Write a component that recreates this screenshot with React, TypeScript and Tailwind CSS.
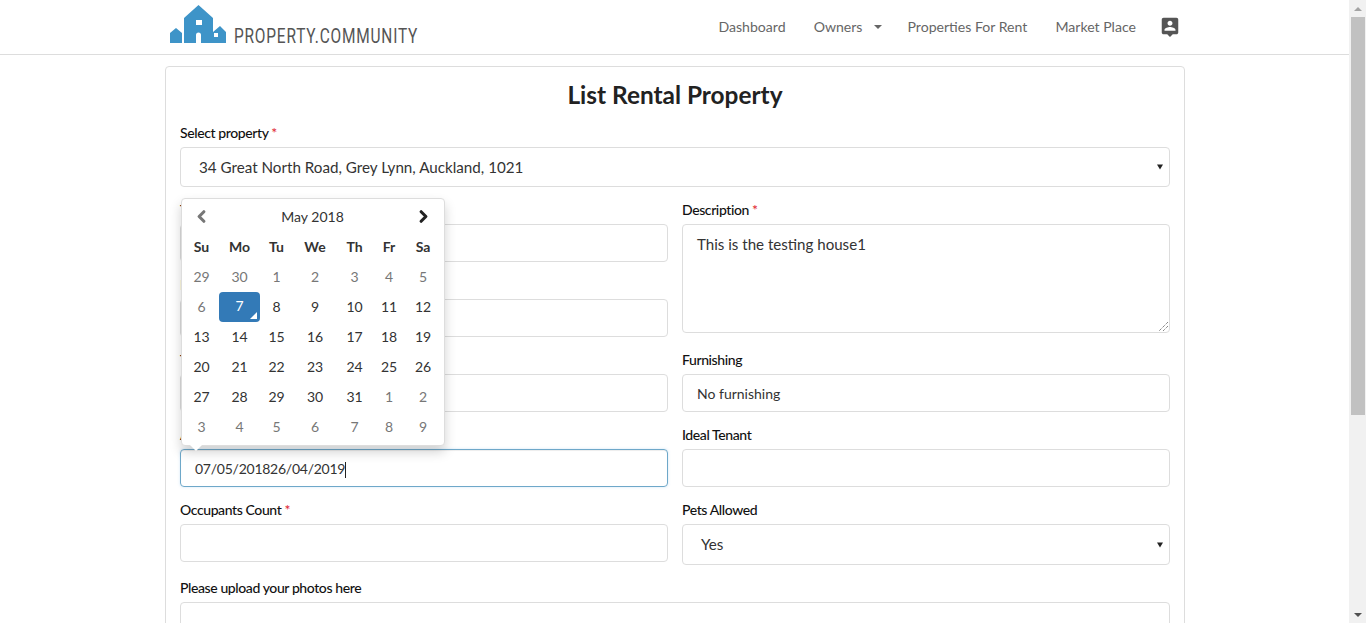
import React from 'react';
import { ChevronLeft, ChevronRight } from 'lucide-react';

const DOW = ['Su', 'Mo', 'Tu', 'We', 'Th', 'Fr', 'Sa'];
const DAYS = [
  29, 30, 1, 2, 3, 4, 5,
  6, 7, 8, 9, 10, 11, 12,
  13, 14, 15, 16, 17, 18, 19,
  20, 21, 22, 23, 24, 25, 26,
  27, 28, 29, 30, 31, 1, 2,
  3, 4, 5, 6, 7, 8, 9,
];

const inputClass =
  'block w-full h-[38px] border border-[#ddd] rounded-[4px] bg-white px-[14px] text-[14px] text-[#333] outline-none';

const Label: React.FC<{ text: string; required?: boolean; tone?: string }> = ({ text, required, tone }) => (
  <div className={`h-5 mb-1 text-[14px] tracking-[-0.4px] leading-5 font-medium whitespace-nowrap ${tone ?? 'text-[#111]'}`}>
    {text}
    {required && <span className="text-[#e0232e]"> *</span>}
  </div>
);

const Arrow = () => (
  <div className="absolute right-[7px] top-1/2 -translate-y-1/2 w-0 h-0 border-x-[3px] border-x-transparent border-t-[5px] border-t-[#222]" />
);

const Logo = () => (
  <div className="flex items-end gap-[7px]">
    <svg width="57" height="38" viewBox="0 0 57 38" className="block">
      <path
        fill="#3e94c8"
        fillRule="evenodd"
        d="M0 38V28L6 23 12 28V38ZM14 38V13L28.5 0 43 13V27L50 21 56 27V38H31V30a2.5 2.5 0 0 0-5 0V38ZM26 15V20H32V15ZM44 28V32H48V28Z"
      />
    </svg>
    <span className="block w-[184px] h-[24px] -mb-[5px] text-[#555] text-[21px] leading-[24px] tracking-[1.1px] origin-left scale-x-[0.735] whitespace-nowrap font-['Roboto',sans-serif]">
      PROPERTY.COMMUNITY
    </span>
  </div>
);

const PersonPin = () => (
  <svg width="22" height="22" viewBox="0 0 24 24" className="ml-[23px] block" fill="#555">
    <path d="M19 2H5c-1.11 0-2 .9-2 2v14c0 1.1.89 2 2 2h4l3 3 3-3h4c1.1 0 2-.9 2-2V4c0-1.1-.9-2-2-2zm-7 3.3c1.49 0 2.7 1.21 2.7 2.7 0 1.49-1.21 2.7-2.7 2.7-1.49 0-2.7-1.21-2.7-2.7 0-1.49 1.21-2.7 2.7-2.7zM18 16H6v-.9c0-2 4-3.1 6-3.1s6 1.1 6 3.1v.9z" />
  </svg>
);

const Calendar = () => (
  <div className="absolute left-px bottom-[41px] w-[264px] h-[248px] z-10 bg-white rounded-[4px] border border-[#ddd] shadow-[0_6px_12px_rgba(0,0,0,0.18)] pl-[2px] pt-[3px] text-[14px]">
    <div className="grid grid-cols-[35px_41px_33px_44px_35px_34px_34px] auto-rows-[30px] items-center text-center">
      <div className="flex justify-center text-[#777] pb-[2px]">
        <ChevronLeft size={19} strokeWidth={4} />
      </div>
      <div className="col-span-5 text-[#333] pb-[2px]">May 2018</div>
      <div className="flex justify-center text-[#222] pb-[2px]">
        <ChevronRight size={19} strokeWidth={4} />
      </div>
      {DOW.map((d) => (
        <div key={d} className="font-bold text-[#333] pb-[2px]">
          {d}
        </div>
      ))}
      {DAYS.map((d, i) => {
        const muted = i < 7 || i === 7 || i > 32;
        if (i === 8) {
          return (
            <div key={i} className="relative h-[30px] leading-[28px] bg-[#337ab7] text-white rounded-[4px]">
              {d}
              <span className="absolute right-[3px] bottom-[3px] w-0 h-0 border-l-[7px] border-l-transparent border-b-[7px] border-b-white" />
            </div>
          );
        }
        return (
          <div key={i} className={`pb-[2px] ${muted ? 'text-[#777]' : 'text-[#333]'}`}>
            {d}
          </div>
        );
      })}
    </div>
    <div className="absolute left-[8px] top-full w-0 h-0 border-x-[6px] border-x-transparent border-t-[6px] border-t-white" />
  </div>
);

const Scrollbar = () => (
  <div className="w-[17px] h-full bg-[#f1f1f1] flex flex-col items-center shrink-0">
    <div className="h-[17px] flex items-center justify-center">
      <div className="w-0 h-0 border-x-[4px] border-x-transparent border-b-[4px] border-b-[#a3a3a3]" />
    </div>
    <div className="w-[14px] h-[398px] bg-[#c1c1c1]" />
    <div className="flex-1" />
    <div className="h-[17px] flex items-center justify-center">
      <div className="w-0 h-0 border-x-[4px] border-x-transparent border-t-[4px] border-t-[#505050]" />
    </div>
  </div>
);

export default function App() {
  return (
    <div className="flex h-[623px] overflow-hidden bg-white font-['Lato',sans-serif]">
      <div className="flex-1 min-w-0 overflow-hidden">
        <nav className="h-[55px] border-b border-[#ddd] pl-[170px] pr-[168px] flex items-center justify-between">
          <div className="-mt-[6px]">
            <Logo />
          </div>
          <div className="flex items-center text-[14.1px] text-[#666] -mt-[1px]">
            <span>Dashboard</span>
            <span className="ml-[28px]">Owners</span>
            <span className="ml-[12px] w-0 h-0 border-x-[4px] border-x-transparent border-t-[4px] border-t-[#666]" />
            <span className="ml-[25px]">Properties For Rent</span>
            <span className="ml-[28px]">Market Place</span>
            <PersonPin />
          </div>
        </nav>

        <div className="ml-[165px] mt-[11px] w-[1020px] h-[600px] border border-[#ddd] rounded-[4px] px-[14px] pt-[11px]">
          <h1 className="text-center text-[24.4px] leading-[34px] font-bold text-[#222] mb-[11px]">
            List Rental Property
          </h1>

          <Label text="Select property" required />
          <div className="relative mb-[13px]">
            <div className="h-10 border border-[#ddd] rounded-[4px] pl-[18px] text-[15.2px] leading-[38px] text-[#333]">
              34 Great North Road, Grey Lynn, Auckland, 1021
            </div>
            <Arrow />
          </div>

          <div className="flex gap-[14px]">
            <div className="flex-1 min-w-0 flex flex-col gap-[13px]">
              <div>
                <Label text="Title" required />
                <input className={inputClass} />
              </div>
              <div>
                <Label text="Rent Amount" required tone="text-[#c98a3e]" />
                <input className={inputClass} />
              </div>
              <div>
                <Label text="Type" />
                <input className={inputClass} />
              </div>
              <div>
                <Label text="Available From" />
                <div className="relative">
                  <div className="h-[38px] border border-[#6ea8c9] rounded-[4px] px-[14px] text-[14px] tracking-[-0.25px] leading-[38px] text-[#333] shadow-[inset_0_1px_1px_rgba(0,0,0,0.075),0_0_3px_rgba(102,175,233,0.3)]">
                    07/05/201826/04/2019
                    <span className="inline-block w-px h-[16px] bg-[#222] align-middle" />
                  </div>
                  <Calendar />
                </div>
              </div>
              <div>
                <Label text="Occupants Count" required />
                <input className={inputClass} />
              </div>
            </div>

            <div className="flex-1 min-w-0 flex flex-col gap-[13px]">
              <div className="mb-[4px]">
                <Label text="Description" required />
                <div className="relative h-[109px] border border-[#ddd] rounded-[4px] px-[14px] pt-[9px] text-[15.1px] leading-[20px] text-[#333]">
                  This is the testing house1
                  <svg width="9" height="9" viewBox="0 0 9 9" className="absolute right-px bottom-px">
                    <path d="M9 0 0 9M9 4 4 9" stroke="#555" strokeWidth="1" strokeDasharray="1 1" />
                  </svg>
                </div>
              </div>
              <div>
                <Label text="Furnishing" />
                <input className={inputClass} defaultValue="No furnishing" />
              </div>
              <div>
                <Label text="Ideal Tenant" />
                <input className={inputClass} />
              </div>
              <div>
                <Label text="Pets Allowed" />
                <div className="relative">
                  <div className="h-[41px] border border-[#ddd] rounded-[4px] pl-[18px] text-[15.2px] leading-[39px] text-[#333]">
                    Yes
                  </div>
                  <Arrow />
                </div>
              </div>
            </div>
          </div>

          <div className="mt-[13px]">
            <Label text="Please upload your photos here" />
            <div className="h-[120px] border border-[#ddd] rounded-[4px]" />
          </div>
        </div>
      </div>
      <Scrollbar />
    </div>
  );
}
